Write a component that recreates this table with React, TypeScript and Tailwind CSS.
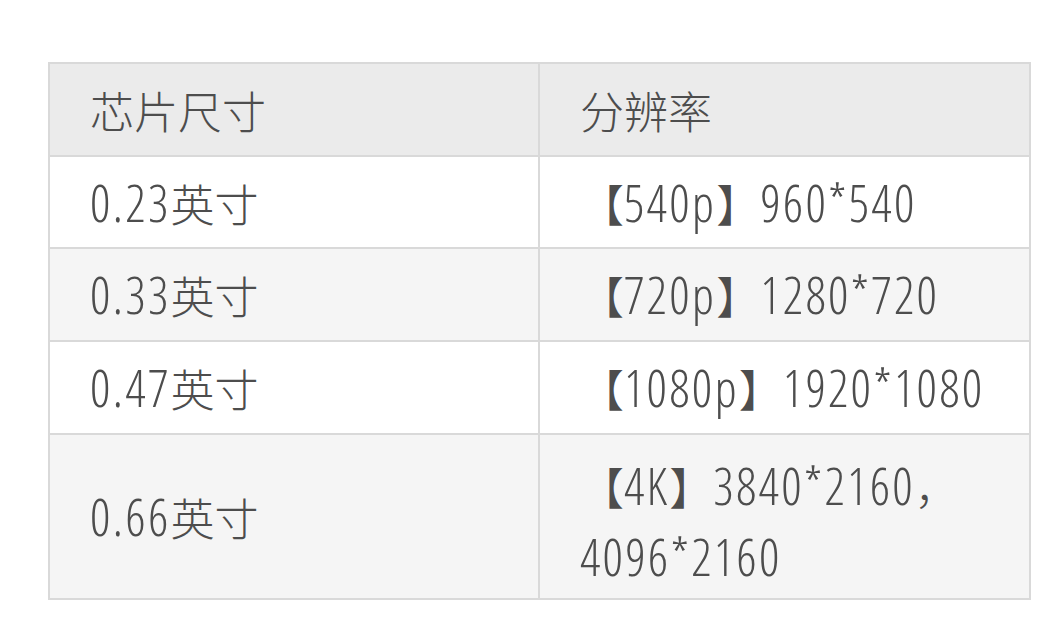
import React from "react";

const NUM = "font-['Open_Sans_Condensed_Light','Open_Sans',sans-serif] [font-stretch:75%] tracking-[2.2px]";
const CJK = "font-['Noto_Sans_CJK_SC',sans-serif] text-[44px] [font-stretch:normal] tracking-normal";

function C({ children }: { children: React.ReactNode }) {
  return <span className={CJK}>{children}</span>;
}

function Cell({ bg, children }: { bg: string; children: React.ReactNode }) {
  return (
    <div className={`${bg} flex items-center pl-[40px]`}>
      <div className={`${NUM} text-[51px] font-light leading-[70px] text-[#4d4d4d] whitespace-nowrap`}>{children}</div>
    </div>
  );
}

export default function App() {
  return (
    <div className="w-[1064px] h-[641px] bg-white pl-[48px] pt-[62px]">
      <div className="grid w-[983px] grid-cols-[488px_489px] grid-rows-[91px_90px_91px_91px_163px] gap-[2px] bg-[#d9d9d9] p-[2px]">
        <Cell bg="bg-[#ebebeb]"><C>芯片尺寸</C></Cell>
        <Cell bg="bg-[#ebebeb]"><C>分辨率</C></Cell>

        <Cell bg="bg-white">0.23<C>英寸</C></Cell>
        <Cell bg="bg-white"><C>【</C>540p<C>】</C>960*540</Cell>

        <Cell bg="bg-[#f5f5f5]">0.33<C>英寸</C></Cell>
        <Cell bg="bg-[#f5f5f5]"><C>【</C>720p<C>】</C>1280*720</Cell>

        <Cell bg="bg-white">0.47<C>英寸</C></Cell>
        <Cell bg="bg-white"><C>【</C>1080p<C>】</C>1920*1080</Cell>

        <Cell bg="bg-[#f5f5f5]">0.66<C>英寸</C></Cell>
        <Cell bg="bg-[#f5f5f5]">
          <div className="pt-[8px]">
            <div><C>【</C>4K<C>】</C>3840*2160<C>，</C></div>
            <div>4096*2160</div>
          </div>
        </Cell>
      </div>
    </div>
  );
}
